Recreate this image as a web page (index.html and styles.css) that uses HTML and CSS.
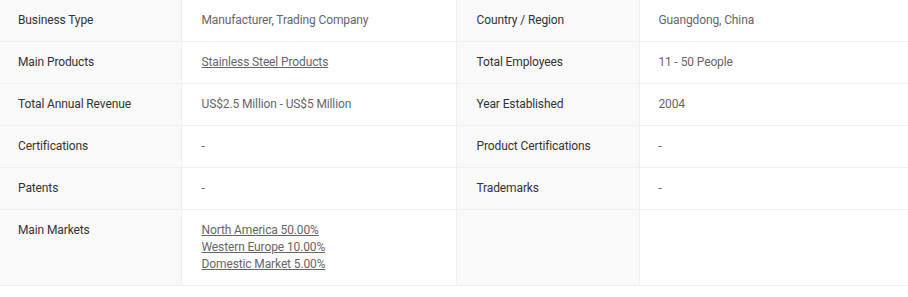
FILE: index.html
```html
<!DOCTYPE html>
<html>
<head>
<meta charset="utf-8">
<link rel="stylesheet" href="styles.css">
</head>
<body>
<table class="info">
  <colgroup>
    <col class="c1"><col class="c2"><col class="c3"><col class="c4">
  </colgroup>
  <tr>
    <th class="k">Business Type</th>
    <td class="v">Manufacturer, Trading Company</td>
    <th class="k k2">Country / Region</th>
    <td class="v v2">Guangdong, China</td>
  </tr>
  <tr>
    <th class="k">Main Products</th>
    <td class="v"><a href="#">Stainless Steel Products</a></td>
    <th class="k k2">Total Employees</th>
    <td class="v v2">11 - 50 People</td>
  </tr>
  <tr>
    <th class="k">Total Annual Revenue</th>
    <td class="v">US$2.5 Million - US$5 Million</td>
    <th class="k k2">Year Established</th>
    <td class="v v2">2004</td>
  </tr>
  <tr>
    <th class="k">Certifications</th>
    <td class="v">-</td>
    <th class="k k2">Product Certifications</th>
    <td class="v v2">-</td>
  </tr>
  <tr>
    <th class="k">Patents</th>
    <td class="v">-</td>
    <th class="k k2">Trademarks</th>
    <td class="v v2">-</td>
  </tr>
  <tr>
    <th class="k">Main Markets</th>
    <td class="v">
      <a href="#">North America 50.00%</a><br>
      <a href="#">Western Europe 10.00%</a><br>
      <a href="#">Domestic Market 5.00%</a>
    </td>
    <th class="k k2"></th>
    <td class="v v2"></td>
  </tr>
</table>
</body>
</html>
```
FILE: styles.css
```css
html, body {
  margin: 0;
  padding: 0;
  background: #fff;
}
.info {
  width: 908px;
  border-collapse: collapse;
  table-layout: fixed;
  font-family: Roboto, "Liberation Sans", sans-serif;
  font-size: 12px;
  line-height: 17px;
  letter-spacing: -0.12px;
}
.c1 { width: 181px; }
.c2 { width: 275px; }
.c3 { width: 183px; }
.c4 { width: 269px; }
.info th, .info td {
  padding: 12px 18px 12px 18px;
  text-align: left;
  vertical-align: top;
  font-weight: normal;
  border-bottom: 1px solid #f0f0f0;
  border-right: 1px solid #f0f0f0;
}
.info td.v2 { border-right: none; }
.k {
  background: #f9f9f9;
  color: #333;
}
.v {
  background: #fff;
  color: #666;
  padding-left: 20px !important;
}
.k2 { padding-left: 20px !important; }
.v2 { padding-left: 19px !important; }
.v a {
  color: #666;
  text-decoration: underline;
}
```
